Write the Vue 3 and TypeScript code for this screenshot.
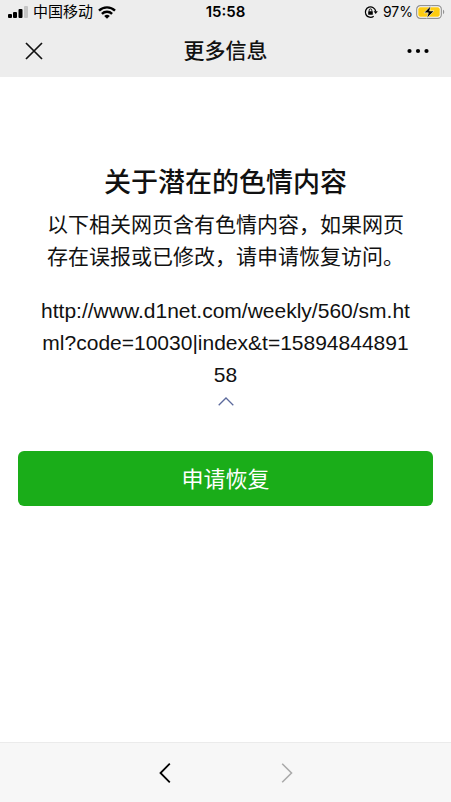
<script setup lang="ts">
import { ref } from 'vue'

const carrier = '中国移动'
const time = '15:58'
const battery = 97
const url = 'http://www.d1net.com/weekly/560/sm.html?code=10030|index&t=1589484489158'
const expanded = ref(true)
</script>

<template>
  <div class="page">
    <header class="top">
      <div class="status">
        <div class="status-side left">
          <svg width="20" height="12" viewBox="0 0 20 12" aria-hidden="true">
            <rect x="0" y="8" width="4" height="4" rx="1" />
            <rect x="5" y="6" width="4" height="6" rx="1" />
            <rect x="10.500" y="3" width="4" height="9" rx="1" />
            <rect x="16" y="0" width="4" height="12" rx="1" fill="#c4c4c4" />
          </svg>
          <span>{{ carrier }}</span>
          <svg width="18" height="13" viewBox="0 0 18 13" aria-hidden="true">
            <g fill="none" stroke="#000" stroke-width="2.400">
              <path d="M1 4.700a11.400 11.400 0 0 1 16 0" />
              <path d="M3.900 7.900a7.200 7.200 0 0 1 10.200 0" />
            </g>
            <path d="M9 12.800 6.200 10a4 4 0 0 1 5.600 0z" />
          </svg>
        </div>
        <span class="time">{{ time }}</span>
        <div class="status-side right">
          <svg width="14" height="14" viewBox="0 0 14 14" aria-hidden="true">
            <path d="M9.700 11.300A5.200 5.200 0 1 1 11.700 6.300" fill="none" stroke="#000" stroke-width="1.300" />
            <path d="M9.600 6.300h4.200l-2.100 2.800z" />
            <rect x="4.200" y="6.200" width="4.600" height="3.600" rx=".5" />
            <path d="M5.200 6.500V5.200a1.300 1.300 0 0 1 2.600 0v1.300" fill="none" stroke="#000" stroke-width=".9" />
          </svg>
          <span class="percent">{{ battery }}%</span>
          <svg class="battery" width="29" height="14" viewBox="0 0 29 14" aria-hidden="true">
            <rect x=".7" y=".7" width="24.600" height="12.600" rx="3.600" fill="#fff" stroke="#929292" stroke-width="1.200" />
            <rect x="2.300" y="2.300" width="21.400" height="9.400" rx="2" fill="#fdcc11" />
            <path d="M27 4.800c1.600.5 1.600 3.900 0 4.400z" fill="#929292" />
            <path d="M14.800.8 8 7.800h4.300l-1.500 5.500 7.200-7.400h-4.400z" stroke="#fff" stroke-width=".6" />
          </svg>
        </div>
      </div>
      <div class="nav">
        <button class="icon-button close" type="button" aria-label="关闭">
          <svg width="18" height="18" viewBox="0 0 18 18" aria-hidden="true">
            <path d="m1 1 16 16M17 1 1 17" fill="none" stroke="#111" stroke-width="1.700" />
          </svg>
        </button>
        <h1 class="nav-title">更多信息</h1>
        <button class="icon-button end" type="button" aria-label="更多">
          <svg width="22" height="6" viewBox="0 0 22 6" aria-hidden="true">
            <circle cx="2.500" cy="3" r="2.100" />
            <circle cx="11" cy="3" r="2.100" />
            <circle cx="19.500" cy="3" r="2.100" />
          </svg>
        </button>
      </div>
    </header>

    <main class="content">
      <h2 class="heading">关于潜在的色情内容</h2>
      <p class="description">以下相关网页含有色情内容，如果网页存在误报或已修改，请申请恢复访问。</p>
      <p v-if="expanded" class="url">{{ url }}</p>
      <button class="toggle" type="button" aria-label="展开或收起网址" :aria-expanded="expanded" @click="expanded = !expanded">
        <svg width="16" height="9" viewBox="0 0 16 9" aria-hidden="true">
          <path d="m.7 8.300 7.300-7.300 7.300 7.300" fill="none" stroke="#5c6a9c" stroke-width="1.300" />
        </svg>
      </button>
      <button class="apply" type="button">申请恢复</button>
    </main>

    <footer class="toolbar">
      <button class="icon-button" type="button" aria-label="后退">
        <svg width="12" height="20" viewBox="0 0 12 20" aria-hidden="true">
          <path d="M10.800.7 1.500 10l9.300 9.300" fill="none" stroke="#000" stroke-width="1.800" />
        </svg>
      </button>
      <button class="icon-button" type="button" aria-label="前进" disabled>
        <svg width="12" height="20" viewBox="0 0 12 20" aria-hidden="true">
          <path d="M1.200.7 10.500 10l-9.300 9.300" fill="none" stroke="#aaa" stroke-width="1.600" />
        </svg>
      </button>
    </footer>
  </div>
</template>

<style>
body {
  margin: 0;
}
</style>

<style scoped>
.page {
  display: flex;
  flex-direction: column;
  min-height: 100vh;
  background: #fff;
  color: #111;
  font-family: Inter, "Noto Sans CJK SC", sans-serif;
}

button {
  padding: 0;
  border: 0;
  background: none;
  font: inherit;
  cursor: pointer;
}

svg {
  display: block;
  flex: none;
}

.top {
  background: #ededed;
}

.status {
  display: grid;
  grid-template-columns: 1fr auto 1fr;
  align-items: center;
  height: 24px;
  padding: 0 6px;
  color: #000;
  font-size: 15px;
  line-height: 24px;
}

.status-side {
  display: flex;
  align-items: center;
  gap: 5px;
}

.left {
  padding-left: 2px;
}

.right {
  justify-content: flex-end;
}

.time {
  font-weight: 600;
}

.percent {
  font-size: 14px;
}

.battery {
  margin-left: -2px;
}

.nav {
  display: grid;
  grid-template-columns: 1fr auto 1fr;
  align-items: center;
  height: 53px;
  padding: 0 22px;
}

.icon-button {
  display: flex;
  align-items: center;
  height: 40px;
}

.close {
  padding-left: 3px;
}

.end {
  justify-self: end;
}

.nav-title {
  margin: 0;
  font-size: 21px;
  font-weight: 500;
  line-height: 32px;
}

.content {
  display: flex;
  flex: 1;
  flex-direction: column;
  padding: 86px 18px 24px;
  text-align: center;
}

.heading {
  margin: 0;
  font-size: 27px;
  font-weight: 500;
  line-height: 40px;
}

.description,
.url {
  margin: 6px 21px 0;
  font-size: 21px;
  line-height: 32px;
}

.url {
  margin-top: 22px;
  font-family: "Liberation Sans", Arial, sans-serif;
  word-break: break-all;
}

.toggle {
  align-self: center;
  padding: 6px 8px 5px;
}

.apply {
  height: 55px;
  margin-top: 40px;
  padding-bottom: 4px;
  border-radius: 6px;
  background: #1aad19;
  color: #fff;
  font-size: 22px;
}

.toolbar {
  display: flex;
  justify-content: center;
  align-items: center;
  gap: 110px;
  height: 59px;
  border-top: 1px solid #ebebeb;
  background: #f7f7f7;
}
</style>
